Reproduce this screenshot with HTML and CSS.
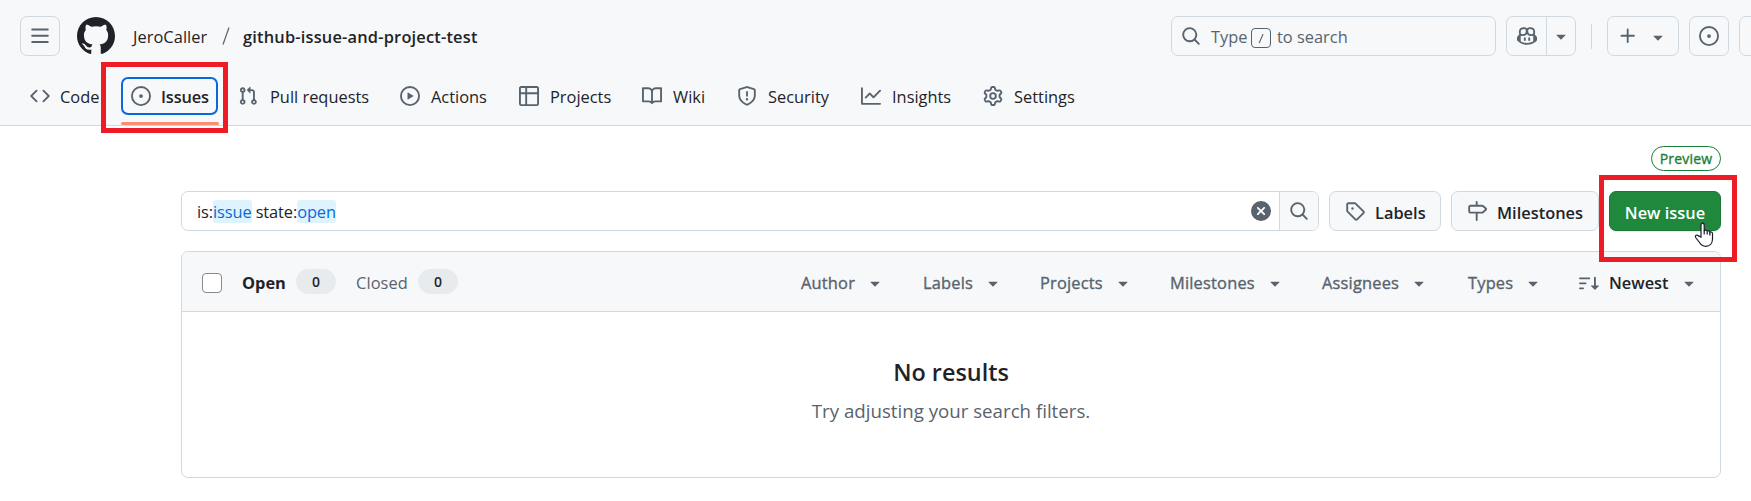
FILE: index.html
```html
<!DOCTYPE html>
<html lang="en">
<head>
<meta charset="utf-8">
<title>Issues · JeroCaller/github-issue-and-project-test</title>
<link rel="stylesheet" href="styles.css">
</head>
<body>
<svg class="sprite" aria-hidden="true">
  <symbol id="caret" viewBox="0 0 16 16"><path d="m4.427 7.427 3.396 3.396a.25.25 0 0 0 .354 0l3.396-3.396A.25.25 0 0 0 11.396 7H4.604a.25.25 0 0 0-.177.427Z"/></symbol>
  <symbol id="search" viewBox="0 0 16 16"><path d="M10.68 11.74a6 6 0 0 1-7.922-8.982 6 6 0 0 1 8.982 7.922l3.04 3.04a.749.749 0 0 1-.326 1.275.749.749 0 0 1-.734-.215ZM11.5 7a4.499 4.499 0 1 0-8.997 0A4.499 4.499 0 0 0 11.5 7Z"/></symbol>
  <symbol id="issue" viewBox="0 0 16 16"><path d="M8 9.5a1.5 1.5 0 1 0 0-3 1.5 1.5 0 0 0 0 3Z"/><path d="M8 0a8 8 0 1 1 0 16A8 8 0 0 1 8 0ZM1.5 8a6.5 6.5 0 1 0 13 0 6.5 6.5 0 0 0-13 0Z"/></symbol>
</svg>

<header class="header">
  <div class="topbar">
    <button class="box menu"><svg class="icon" viewBox="0 0 16 16"><path d="M1 2.75A.75.75 0 0 1 1.75 2h12.5a.75.75 0 0 1 0 1.5H1.75A.75.75 0 0 1 1 2.75Zm0 5A.75.75 0 0 1 1.75 7h12.5a.75.75 0 0 1 0 1.5H1.75A.75.75 0 0 1 1 7.75ZM1.75 12h12.5a.75.75 0 0 1 0 1.5H1.75a.75.75 0 0 1 0-1.5Z"/></svg></button>
    <svg class="logo" viewBox="0 0 16 16"><path d="M8 0c4.42 0 8 3.58 8 8a8.013 8.013 0 0 1-5.45 7.59c-.4.08-.55-.17-.55-.38 0-.27.01-1.13.01-2.2 0-.75-.25-1.23-.54-1.48 1.78-.2 3.65-.88 3.65-3.95 0-.88-.31-1.59-.82-2.15.08-.2.36-1.02-.08-2.12 0 0-.67-.22-2.2.82-.64-.18-1.32-.27-2-.27-.68 0-1.36.09-2 .27-1.53-1.03-2.2-.82-2.2-.82-.44 1.1-.16 1.92-.08 2.12-.51.56-.82 1.28-.82 2.15 0 3.06 1.86 3.75 3.64 3.95-.23.2-.44.55-.51 1.07-.46.21-1.61.55-2.33-.66-.15-.24-.6-.83-1.23-.82-.67.01-.27.38.01.53.34.19.73.9.82 1.13.16.45.68 1.31 2.69.94 0 .67.01 1.3.01 1.49 0 .21-.15.45-.55.38A7.995 7.995 0 0 1 0 8c0-4.42 3.58-8 8-8Z"/></svg>
    <div class="crumbs"><span>JeroCaller</span><svg class="slash" viewBox="0 0 8 18"><path d="M7 .5 1 17.5"/></svg><strong>github-issue-and-project-test</strong></div>
    <div class="box searchbox"><svg class="icon"><use href="#search"/></svg><span class="hint">Type</span><kbd><svg viewBox="0 0 20 20"><path d="M12.3 5.5 8 15.5"/></svg></kbd><span class="hint-end">to search</span></div>
    <div class="box split"><span class="split-main"><svg class="icon" viewBox="0 0 16 16"><path d="M7.998 15.035c-4.562 0-7.873-2.914-7.998-3.749V9.338c.085-.628.677-1.686 1.588-2.065.013-.07.024-.143.036-.218.029-.183.06-.384.126-.612-.201-.508-.254-1.084-.254-1.656 0-.87.128-1.769.693-2.484.579-.733 1.494-1.124 2.724-1.261 1.206-.134 2.262.034 2.944.765.05.053.096.108.139.165.044-.057.094-.112.143-.165.682-.731 1.738-.899 2.944-.765 1.23.137 2.145.528 2.724 1.261.566.715.693 1.614.693 2.484 0 .572-.053 1.148-.254 1.656.066.228.098.429.126.612.012.076.024.148.037.218.924.385 1.522 1.471 1.591 2.095v1.872c0 .766-3.351 3.795-8.002 3.795Zm0-1.485c2.28 0 4.584-1.11 5.002-1.433V7.862l-.023-.116c-.49.21-1.075.291-1.727.291-1.146 0-2.059-.327-2.71-.991A3.222 3.222 0 0 1 8 6.303a3.24 3.24 0 0 1-.544.743c-.65.664-1.563.991-2.71.991-.652 0-1.236-.081-1.727-.291l-.023.116v4.255c.419.323 2.722 1.433 5.002 1.433ZM6.762 2.83c-.193-.206-.637-.413-1.682-.297-1.019.113-1.479.404-1.713.7-.247.312-.369.789-.369 1.554 0 .793.129 1.171.308 1.371.162.181.519.379 1.442.379.853 0 1.339-.235 1.638-.54.315-.322.527-.827.617-1.553.117-.935-.037-1.395-.241-1.614Zm4.155-.297c-1.044-.116-1.488.091-1.681.297-.204.219-.359.679-.242 1.614.091.726.303 1.231.618 1.553.299.305.784.54 1.638.54.922 0 1.28-.198 1.442-.379.179-.2.308-.578.308-1.371 0-.765-.123-1.242-.37-1.554-.233-.296-.693-.587-1.713-.7Z"/><path d="M6.25 9.037a.75.75 0 0 1 .75.75v1.501a.75.75 0 0 1-1.5 0V9.787a.75.75 0 0 1 .75-.75Zm4.25.75v1.501a.75.75 0 0 1-1.5 0V9.787a.75.75 0 0 1 1.5 0Z"/></svg></span><span class="split-more"><svg class="icon"><use href="#caret"/></svg></span></div>
    <span class="rule"></span>
    <button class="box create"><svg class="icon" viewBox="0 0 16 16"><path d="M7.75 2a.75.75 0 0 1 .75.75V7h4.25a.75.75 0 0 1 0 1.5H8.5v4.25a.75.75 0 0 1-1.5 0V8.5H2.75a.75.75 0 0 1 0-1.5H7V2.75A.75.75 0 0 1 7.75 2Z"/></svg><svg class="icon low"><use href="#caret"/></svg></button>
    <button class="box square"><svg class="icon"><use href="#issue"/></svg></button>
    <button class="box square"></button>
  </div>
  <nav class="tabs">
    <a class="tab"><svg class="icon" viewBox="0 0 16 16"><path d="m11.28 3.22 4.25 4.25a.75.75 0 0 1 0 1.06l-4.25 4.25a.749.749 0 0 1-1.275-.326.749.749 0 0 1 .215-.734L13.94 8l-3.72-3.72a.749.749 0 0 1 .326-1.275.749.749 0 0 1 .734.215Zm-6.56 0a.751.751 0 0 1 1.042.018.751.751 0 0 1 .018 1.042L2.06 8l3.72 3.72a.749.749 0 0 1-.326 1.275.749.749 0 0 1-.734-.215L.47 8.53a.75.75 0 0 1 0-1.06Z"/></svg><span>Code</span></a>
    <a class="tab current"><svg class="icon"><use href="#issue"/></svg><span>Issues</span></a>
    <a class="tab pulls"><svg class="icon" viewBox="0 0 16 16"><path d="M1.5 3.25a2.25 2.25 0 1 1 3 2.122v5.256a2.251 2.251 0 1 1-1.5 0V5.372A2.25 2.25 0 0 1 1.5 3.25Zm5.677-.177L9.573.677A.25.25 0 0 1 10 .854V2.5h1A2.5 2.5 0 0 1 13.5 5v5.628a2.251 2.251 0 1 1-1.5 0V5a1 1 0 0 0-1-1h-1v1.646a.25.25 0 0 1-.427.177L7.177 3.427a.25.25 0 0 1 0-.354ZM3.75 2.5a.75.75 0 1 0 0 1.5.75.75 0 0 0 0-1.5Zm0 9.5a.75.75 0 1 0 0 1.5.75.75 0 0 0 0-1.5Zm8.25.75a.75.75 0 1 0 1.5 0 .75.75 0 0 0-1.5 0Z"/></svg><span>Pull requests</span></a>
    <a class="tab"><svg class="icon" viewBox="0 0 16 16"><path d="M8 0a8 8 0 1 1 0 16A8 8 0 0 1 8 0ZM1.5 8a6.5 6.5 0 1 0 13 0 6.5 6.5 0 0 0-13 0Zm4.879-2.773 4.264 2.559a.25.25 0 0 1 0 .428l-4.264 2.559A.25.25 0 0 1 6 10.559V5.442a.25.25 0 0 1 .379-.215Z"/></svg><span>Actions</span></a>
    <a class="tab"><svg class="icon" viewBox="0 0 16 16"><path d="M0 1.75C0 .784.784 0 1.75 0h12.5C15.216 0 16 .784 16 1.75v12.5A1.75 1.75 0 0 1 14.25 16H1.75A1.75 1.75 0 0 1 0 14.25ZM6.5 6.5v8h7.75a.25.25 0 0 0 .25-.25V6.5Zm8-1.5V1.75a.25.25 0 0 0-.25-.25H6.5V5Zm-13 1.5v7.75c0 .138.112.25.25.25H5v-8ZM5 5V1.5H1.75a.25.25 0 0 0-.25.25V5Z"/></svg><span>Projects</span></a>
    <a class="tab"><svg class="icon" viewBox="0 0 16 16"><path d="M0 1.75A.75.75 0 0 1 .75 1h4.253c1.227 0 2.317.59 3 1.501A3.743 3.743 0 0 1 11.006 1h4.245a.75.75 0 0 1 .75.75v10.5a.75.75 0 0 1-.75.75h-4.507a2.25 2.25 0 0 0-1.591.659l-.622.621a.75.75 0 0 1-1.06 0l-.622-.621A2.25 2.25 0 0 0 5.258 13H.75a.75.75 0 0 1-.75-.75Zm7.251 10.324.004-5.073-.002-2.253A2.25 2.25 0 0 0 5.003 2.5H1.5v9h3.757a3.75 3.75 0 0 1 1.994.574ZM8.755 4.75l-.004 7.322a3.752 3.752 0 0 1 1.992-.572H14.5v-9h-3.495a2.25 2.25 0 0 0-2.25 2.25Z"/></svg><span>Wiki</span></a>
    <a class="tab"><svg class="icon" viewBox="0 0 16 16"><path d="M7.467.133a1.748 1.748 0 0 1 1.066 0l5.25 1.68A1.75 1.75 0 0 1 15 3.48V7c0 1.566-.32 3.182-1.303 4.682-.983 1.498-2.585 2.813-5.032 3.855a1.697 1.697 0 0 1-1.33 0c-2.447-1.042-4.049-2.357-5.032-3.855C1.32 10.182 1 8.566 1 7V3.48a1.75 1.75 0 0 1 1.217-1.667Zm.61 1.429a.25.25 0 0 0-.153 0l-5.25 1.68a.25.25 0 0 0-.174.238V7c0 1.358.275 2.666 1.057 3.86.784 1.194 2.121 2.34 4.366 3.297a.196.196 0 0 0 .154 0c2.245-.956 3.582-2.104 4.366-3.298C13.225 9.666 13.5 8.36 13.5 7V3.48a.251.251 0 0 0-.174-.237l-5.25-1.68ZM8.75 4.75v3a.75.75 0 0 1-1.5 0v-3a.75.75 0 0 1 1.5 0ZM9 10.5a1 1 0 1 1-2 0 1 1 0 0 1 2 0Z"/></svg><span>Security</span></a>
    <a class="tab"><svg class="icon" viewBox="0 0 16 16"><path d="M1.5 1.75V13.5h13.75a.75.75 0 0 1 0 1.5H.75a.75.75 0 0 1-.75-.75V1.75a.75.75 0 0 1 1.5 0Zm14.28 2.53-5.25 5.25a.75.75 0 0 1-1.06 0L7 7.06 4.28 9.78a.751.751 0 0 1-1.042-.018.751.751 0 0 1-.018-1.042l3.25-3.25a.75.75 0 0 1 1.06 0L10 7.94l4.72-4.72a.751.751 0 0 1 1.042.018.751.751 0 0 1 .018 1.042Z"/></svg><span>Insights</span></a>
    <a class="tab"><svg class="icon" viewBox="0 0 16 16"><path d="M8 0a8.2 8.2 0 0 1 .701.031C9.444.095 9.99.645 10.16 1.29l.288 1.107c.018.066.079.158.212.224.231.114.454.243.668.386.123.082.233.09.299.071l1.103-.303c.644-.176 1.392.021 1.82.63.27.385.506.792.704 1.218.315.675.111 1.422-.364 1.891l-.814.806c-.049.048-.098.147-.088.294.016.257.016.515 0 .772-.01.147.038.246.088.294l.814.806c.475.469.679 1.216.364 1.891a7.977 7.977 0 0 1-.704 1.217c-.428.61-1.176.807-1.82.63l-1.102-.302c-.067-.019-.177-.011-.3.071a5.909 5.909 0 0 1-.668.386c-.133.066-.194.158-.211.224l-.29 1.106c-.168.646-.715 1.196-1.458 1.26a8.006 8.006 0 0 1-1.402 0c-.743-.064-1.289-.614-1.458-1.26l-.289-1.106c-.018-.066-.079-.158-.212-.224a5.738 5.738 0 0 1-.668-.386c-.123-.082-.233-.09-.299-.071l-1.103.303c-.644.176-1.392-.021-1.82-.63a8.12 8.12 0 0 1-.704-1.218c-.315-.675-.111-1.422.363-1.891l.815-.806c.05-.048.098-.147.088-.294a6.214 6.214 0 0 1 0-.772c.01-.147-.038-.246-.088-.294l-.815-.806C.635 6.045.431 5.298.746 4.623a7.92 7.92 0 0 1 .704-1.217c.428-.61 1.176-.807 1.82-.63l1.102.302c.067.019.177.011.3-.071.214-.143.437-.272.668-.386.133-.066.194-.158.211-.224l.29-1.106C6.009.645 6.556.095 7.299.03 7.53.01 7.764 0 8 0Zm-.571 1.525c-.036.003-.108.036-.137.146l-.289 1.105c-.147.561-.549.967-.998 1.189-.173.086-.34.183-.5.29-.417.278-.97.423-1.529.27l-1.103-.303c-.109-.03-.175.016-.195.045-.22.312-.412.644-.573.99-.014.031-.021.11.059.19l.815.806c.411.406.562.957.53 1.456a4.709 4.709 0 0 0 0 .582c.032.499-.119 1.05-.53 1.456l-.815.806c-.081.08-.073.159-.059.19.162.346.353.677.573.989.02.03.085.076.195.046l1.102-.303c.56-.153 1.113-.008 1.53.27.161.107.328.204.501.29.447.222.85.629.997 1.189l.289 1.105c.029.109.101.143.137.146a6.6 6.6 0 0 0 1.142 0c.036-.003.108-.036.137-.146l.289-1.105c.147-.561.549-.967.998-1.189.173-.086.34-.183.5-.29.417-.278.97-.423 1.529-.27l1.103.303c.109.029.175-.016.195-.045.22-.313.411-.644.573-.99.014-.031.021-.11-.059-.19l-.815-.806c-.411-.406-.562-.957-.53-1.456a4.709 4.709 0 0 0 0-.582c-.032-.499.119-1.05.53-1.456l.815-.806c.081-.08.073-.159.059-.19a6.464 6.464 0 0 0-.573-.989c-.02-.03-.085-.076-.195-.046l-1.102.303c-.56.153-1.113.008-1.53-.27a4.44 4.44 0 0 0-.501-.29c-.447-.222-.85-.629-.997-1.189l-.289-1.105c-.029-.11-.101-.143-.137-.146a6.6 6.6 0 0 0-1.142 0ZM11 8a3 3 0 1 1-6 0 3 3 0 0 1 6 0ZM9.5 8a1.5 1.5 0 1 0-3.001.001A1.5 1.5 0 0 0 9.5 8Z"/></svg><span>Settings</span></a>
  </nav>
</header>

<main class="main">
  <div class="preview-row"><span class="preview">Preview</span></div>
  <div class="toolbar">
    <div class="filter"><div class="query">is:<mark>issue</mark> state:<mark>open</mark></div><svg class="icon clear" viewBox="0 0 16 16"><path d="M2.343 13.657A8 8 0 1 1 13.658 2.343 8 8 0 0 1 2.343 13.657ZM6.03 4.97a.751.751 0 0 0-1.042.018.751.751 0 0 0-.018 1.042L6.94 8 4.97 9.97a.749.749 0 0 0 .326 1.275.749.749 0 0 0 .734-.215L8 9.06l1.97 1.97a.749.749 0 0 0 1.275-.326.749.749 0 0 0-.215-.734L9.06 8l1.97-1.97a.749.749 0 0 0-.326-1.275.749.749 0 0 0-.734.215L8 6.94Z"/></svg><span class="go"><svg class="icon"><use href="#search"/></svg></span></div>
    <button class="btn labels"><svg class="icon" viewBox="0 0 16 16"><path d="M1 7.775V2.75C1 1.784 1.784 1 2.75 1h5.025c.464 0 .91.184 1.238.513l6.25 6.25a1.75 1.75 0 0 1 0 2.474l-5.026 5.026a1.75 1.75 0 0 1-2.474 0l-6.25-6.25A1.752 1.752 0 0 1 1 7.775Zm1.5 0c0 .066.026.13.073.177l6.25 6.25a.25.25 0 0 0 .354 0l5.025-5.025a.25.25 0 0 0 0-.354l-6.25-6.25a.25.25 0 0 0-.177-.073H2.75a.25.25 0 0 0-.25.25ZM6 5a1 1 0 1 1 0 2 1 1 0 0 1 0-2Z"/></svg><span>Labels</span></button>
    <button class="btn milestones"><svg class="icon" viewBox="0 0 16 16"><path d="M7.75 0a.75.75 0 0 1 .75.75V3h3.634c.414 0 .814.147 1.13.414l2.07 1.75a1.75 1.75 0 0 1 0 2.672l-2.07 1.75a1.75 1.75 0 0 1-1.13.414H8.5v5.25a.75.75 0 0 1-1.5 0V10H2.75A1.75 1.75 0 0 1 1 8.25v-3.5C1 3.784 1.784 3 2.75 3H7V.75A.75.75 0 0 1 7.75 0Zm4.384 8.5a.25.25 0 0 0 .161-.06l2.07-1.75a.248.248 0 0 0 0-.38l-2.07-1.75a.25.25 0 0 0-.161-.06H2.75a.25.25 0 0 0-.25.25v3.5c0 .138.112.25.25.25h9.384Z"/></svg><span>Milestones</span></button>
    <button class="btn primary"><span>New issue</span></button>
  </div>
  <section class="list">
    <div class="list-head">
      <span class="check"></span>
      <span class="state open">Open</span><span class="count">0</span>
      <span class="state closed">Closed</span><span class="count">0</span>
      <div class="facets">
        <span class="facet">Author<svg class="icon"><use href="#caret"/></svg></span>
        <span class="facet">Labels<svg class="icon"><use href="#caret"/></svg></span>
        <span class="facet">Projects<svg class="icon"><use href="#caret"/></svg></span>
        <span class="facet">Milestones<svg class="icon"><use href="#caret"/></svg></span>
        <span class="facet">Assignees<svg class="icon"><use href="#caret"/></svg></span>
        <span class="facet">Types<svg class="icon"><use href="#caret"/></svg></span>
        <span class="facet sort"><svg class="icon" viewBox="0 0 16 16"><path d="M0 4.25a.75.75 0 0 1 .75-.75h7.5a.75.75 0 0 1 0 1.5H.75A.75.75 0 0 1 0 4.25Zm0 4a.75.75 0 0 1 .75-.75h4.5a.75.75 0 0 1 0 1.5H.75A.75.75 0 0 1 0 8.25Zm0 4a.75.75 0 0 1 .75-.75h2.5a.75.75 0 0 1 0 1.5H.75a.75.75 0 0 1-.75-.75ZM13.5 10h2.25a.25.25 0 0 1 .177.427l-3 3a.25.25 0 0 1-.354 0l-3-3A.25.25 0 0 1 9.75 10H12V3.75a.75.75 0 0 1 1.5 0V10Z"/></svg><b>Newest</b><svg class="icon"><use href="#caret"/></svg></span>
      </div>
    </div>
    <div class="empty"><h2>No results</h2><p>Try adjusting your search filters.</p></div>
  </section>
</main>

<div class="callout callout-tab"></div>
<div class="callout callout-new"></div>
<svg class="cursor" viewBox="0 0 20 26"><path d="M7 15V3.2C7 .4 10.2.4 10.2 3.2V9c.4-1.400 3-1.200 3 .6.500-1.200 2.700-.9 2.700.8.6-1 2.600-.6 2.600 1.200V17c0 4.500-2.800 7.300-6.800 7.300-3 0-4.800-1.300-6.200-3.800L1.500 15.300c-.8-2 1.600-3 3-1.400Z"/><path d="M10.200 8.500v4M13.200 9.500v3M15.900 10.500v3"/></svg>
</body>
</html>
```
FILE: styles.css
```css
* { box-sizing: border-box; }

body {
  margin: 0;
  position: relative;
  width: 1751px;
  height: 501px;
  overflow: hidden;
  background: #fff;
  color: #1f2328;
  font: 16.4px/24px "Open Sans", "Noto Sans", sans-serif;
}

button { font: inherit; color: inherit; padding: 0; }
.sprite { display: none; }
.icon { flex: none; display: block; width: 20px; height: 20px; fill: #59636e; }

/* Header */
.header { height: 126px; background: #f6f8fa; border-bottom: 1px solid #d1d9e0; }
.topbar { display: flex; align-items: center; height: 72px; padding-left: 20px; }
.box {
  flex: none;
  display: flex;
  align-items: center;
  height: 40px;
  border: 1px solid #d1d9e0;
  border-radius: 7px;
  background: #f6f8fa;
}
.menu, .square { width: 40px; justify-content: center; }
.logo { flex: none; width: 38px; height: 38px; margin-left: 17px; fill: #1f2328; }
.crumbs { flex: none; display: flex; align-items: center; width: 1038px; margin-left: 18px; white-space: nowrap; }
.crumbs span { width: 89px; padding-top: 1px; letter-spacing: .05px; }
.crumbs strong { margin-left: 13px; padding-top: 1px; font-weight: 600; letter-spacing: .19px; }
.slash { width: 8px; height: 18px; fill: none; stroke: #59636e; stroke-width: 1.2; }

.searchbox { width: 325px; margin-right: 10px; padding-left: 9px; color: #59636e; }
.hint { width: 40px; margin-left: 10px; padding-top: 1px; }
.hint-end { padding-top: 1px; }
kbd { width: 20px; height: 20px; margin: 3px 6px 0 0; border: 1px solid #59636e; border-radius: 4px; }
kbd svg { display: block; width: 18px; height: 18px; fill: none; stroke: #59636e; stroke-width: 1.2; }
.split { width: 70px; margin-right: 15px; }
.split span { display: flex; align-items: center; justify-content: center; height: 38px; }
.split-main { width: 40px; border-right: 1px solid #d1d9e0; }
.split-more { width: 28px; }
.rule { flex: none; width: 1px; height: 25px; margin-right: 15px; background: #d1d9e0; }
.create { width: 72px; margin-right: 10px; padding-left: 10px; gap: 10px; }
.low { margin-top: 2px; }
.square { margin-right: 10px; }

.tabs {
  display: grid;
  grid-template-columns: 91px 117px 162px 119px 123px 95px 124px 122px 110px;
  padding-left: 30px;
}
.tab { display: flex; align-items: center; gap: 11px; height: 53px; padding-bottom: 5px; white-space: nowrap; }
.tab span { padding-top: 1px; }
.pulls { gap: 12px; }
.tab:first-child { gap: 10px; }
.current {
  position: relative;
  width: 97px;
  height: 38px;
  margin-top: 5px;
  padding: 0 0 0 8px;
  gap: 10px;
  border: 2px solid #0969da;
  border-radius: 7px;
  font-weight: 600;
  letter-spacing: -.15px;
}
.current::after {
  content: "";
  position: absolute;
  left: -2px;
  right: -3px;
  top: 43px;
  height: 3px;
  border-radius: 2px;
  background: #fd8c73;
}

/* Issue list */
.main { padding: 20px 30px 0 181px; }
.preview-row { display: flex; justify-content: flex-end; height: 45px; }
.preview {
  width: 70px;
  height: 25px;
  border: 1px solid #1a7f37;
  border-radius: 13px;
  color: #1a7f37;
  font-size: 14px;
  letter-spacing: .2px;
  -webkit-text-stroke: .35px;
  line-height: 24px;
  text-align: center;
}
.toolbar { display: flex; gap: 10px; height: 40px; }
.filter {
  display: flex;
  align-items: center;
  width: 1138px;
  border: 1px solid #d1d9e0;
  border-radius: 7px;
  overflow: hidden;
}
.query { flex: 1; padding: 1px 0 0 15px; white-space: pre; letter-spacing: -.1px; }
mark { display: inline-block; height: 23px; line-height: 24px; border-radius: 3px; background: #ddf4ff; color: #0969da; }
.clear { margin-right: 8px; }
.go { display: flex; align-items: center; width: 39px; height: 38px; padding-left: 9px; border-left: 1px solid #d1d9e0; background: #f6f8fa; }
.btn {
  display: flex;
  align-items: center;
  gap: 10px;
  height: 40px;
  padding-left: 15px;
  border: 1px solid #d1d9e0;
  border-radius: 7px;
  background: #f6f8fa;
  font-weight: 600;
  white-space: nowrap;
}
.btn span { padding-top: 3px; }
.labels { width: 112px; }
.milestones { width: 148px; }
.primary { width: 112px; justify-content: center; padding: 0; border-color: #1b7735; background: #1f883d; color: #fff; box-shadow: 0 1px 1px #1f23281a; }

.list { height: 227px; margin-top: 20px; border: 1px solid #d1d9e0; border-radius: 7px; overflow: hidden; }
.list-head { display: flex; align-items: center; height: 60px; padding: 3px 0 0 20px; border-bottom: 1px solid #d1d9e0; background: #f6f8fa; }
.check { width: 20px; height: 20px; border: 1px solid #818b98; border-radius: 4px; background: #fff; }
.state { margin-left: 20px; }
.open { width: 54px; font-weight: 700; }
.closed { width: 62px; color: #59636e; letter-spacing: .1px; }
.count { width: 40px; height: 25px; margin-top: -3px; border-radius: 13px; background: #e7ebee; font-size: 14px; font-weight: 600; line-height: 25px; text-align: center; }
.facets { display: grid; grid-template-columns: 122px 117px 130px 152px 146px 111px 121px; margin-left: 343px; }
.facet { display: flex; align-items: center; color: #59636e; letter-spacing: .2px; -webkit-text-stroke: .35px; white-space: nowrap; gap: 10px; }
.facet svg { stroke: none; }
.facet b { color: #1f2328; font-weight: 600; letter-spacing: 0; -webkit-text-stroke: 0; }
.empty { padding-top: 42px; text-align: center; }
.empty h2 { margin: 0; font-size: 23.4px; line-height: 36px; font-weight: 600; }
.empty p { margin: 7px 0 0; font-size: 18.7px; line-height: 28px; color: #59636e; }

/* Annotations over the page */
.callout { position: absolute; border: 5px solid #ee1c25; }
.callout-tab { left: 101px; top: 62px; width: 127px; height: 71px; }
.callout-new { left: 1599px; top: 175px; width: 138px; height: 87px; }
.cursor { position: absolute; left: 1694px; top: 222px; width: 20px; height: 26px; fill: #fff; stroke: #1c1c2c; stroke-width: 1.2; }
```
